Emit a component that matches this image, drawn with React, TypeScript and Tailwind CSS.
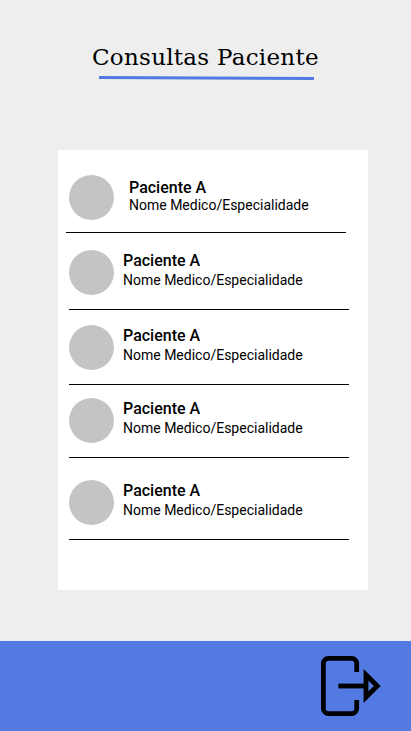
type Appointment = {
  name: string;
  detail: string;
  row: string;
  text: string;
  nameClass: string;
};

const detail = "Nome Medico/Especialidade";

const appointments: Appointment[] = [
  { name: "Paciente A", detail, row: "ml-2 h-[58px] pl-[3px]", text: "ml-[15px] pt-1", nameClass: "h-[18px]" },
  { name: "Paciente A", detail, row: "ml-[11px] mt-[17px] h-[60px]", text: "ml-[9px] pt-0.5", nameClass: "h-[20px]" },
  { name: "Paciente A", detail, row: "ml-[11px] mt-[15px] h-[60px]", text: "ml-[9px] pt-0.5", nameClass: "h-[20px]" },
  { name: "Paciente A", detail, row: "ml-[11px] mt-[13px] h-[60px]", text: "ml-[9px] pt-0.5", nameClass: "h-[20px]" },
  { name: "Paciente A", detail, row: "ml-[11px] mt-[22px] h-[60px]", text: "ml-[9px] pt-0.5", nameClass: "h-[20px]" },
];

function AppointmentRow({ item }: { item: Appointment }) {
  return (
    <li className={`flex w-[280px] border-b border-black ${item.row}`}>
      <span className="size-[45px] shrink-0 rounded-full bg-[#c4c4c4]" />
      <div className={item.text}>
        <p className={`text-[16px] leading-[18px] font-medium whitespace-nowrap ${item.nameClass}`}>{item.name}</p>
        <p className="text-[14px] leading-[16px] whitespace-nowrap">{item.detail}</p>
      </div>
    </li>
  );
}

function ExitIcon() {
  return (
    <svg width="60" height="60" viewBox="0 0 60 60" fill="none" stroke="#000" strokeWidth="4.8">
      <path d="M35.7 16V7.4a5 5 0 0 0-5-5H7.4a5 5 0 0 0-5 5v45.2a5 5 0 0 0 5 5h23.3a5 5 0 0 0 5-5V44" />
      <path d="M17.3 30H45" />
      <path d="M45 18.7 56.3 30 45 41.3Z" />
    </svg>
  );
}

export default function App() {
  return (
    <div className="flex h-[731px] w-[411px] flex-col bg-[#eeeeee] font-['Roboto',sans-serif] text-black">
      <header className="h-[150px] pt-[42px] pl-[92px]">
        <h1 className="h-[33px] font-['DejaVu_Serif',serif] text-[23px] leading-[30px] tracking-[0.27px] whitespace-nowrap">
          Consultas Paciente
        </h1>
        <svg className="ml-[7px]" width="215" height="6" viewBox="0 0 215 6">
          <path d="M0 2.5 215 3.5" stroke="#527ae2" strokeWidth="3" />
        </svg>
      </header>
      <main className="ml-[58px] h-[440px] w-[310px] bg-white pt-[25px]">
        <ul>
          {appointments.map((item, index) => (
            <AppointmentRow key={index} item={item} />
          ))}
        </ul>
      </main>
      <footer className="mt-auto flex h-[90px] justify-end bg-[#527ae2] pt-[15px] pr-[30px]">
        <button aria-label="Sair" className="size-[60px]">
          <ExitIcon />
        </button>
      </footer>
    </div>
  );
}
